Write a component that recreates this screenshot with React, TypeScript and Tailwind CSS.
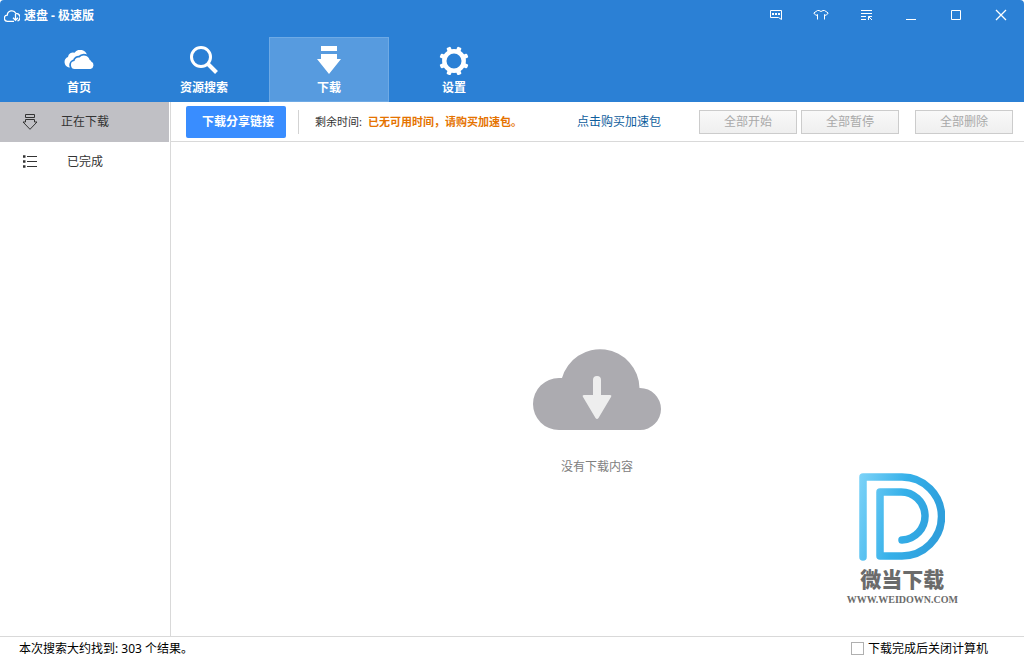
import { useState } from 'react'
import type { ReactNode } from 'react'

type Tab = { id: string; label: string; icon: ReactNode }

const GEAR_ANGLES = [22.5, 67.5, 112.5, 157.5, 202.5, 247.5, 292.5, 337.5]

function CloudsIcon() {
  return (
    <svg width="30" height="20" viewBox="0 0 30 20" fill="#fff">
      <path d="M5 17.500a5.500 5.500 0 0 1-1-10.500a5 5 0 0 1 6.500-4.200a7 7 0 0 1 12.500 2.200v3L12 17z" />
      <path
        d="M11.500 19a4 4 0 0 1-1-8a4.500 4.500 0 0 1 5-3.500a6 6 0 0 1 10.200 2.500q1.300 0 1.500 1.500a4 4 0 0 1-.7 7.500z"
        stroke="#2b80d5"
        strokeWidth="3.500"
      />
      <path d="M11.500 19a4 4 0 0 1-1-8a4.500 4.500 0 0 1 5-3.500a6 6 0 0 1 10.200 2.500q1.300 0 1.500 1.500a4 4 0 0 1-.7 7.500z" />
    </svg>
  )
}

function SearchIcon() {
  return (
    <svg width="28" height="28" viewBox="0 0 28 28" fill="none" stroke="#fff">
      <circle cx="11" cy="11" r="9.500" strokeWidth="3" />
      <path d="M18 18l8.500 8.500" strokeWidth="4" />
    </svg>
  )
}

function DownloadIcon() {
  return (
    <svg width="24" height="28" viewBox="0 0 24 28" fill="#fff">
      <path d="M4 0h16v5H4zM4 8h16v5h4L12 28 0 13h4z" />
    </svg>
  )
}

function GearIcon() {
  return (
    <svg width="30" height="30" viewBox="-15 -16 30 30" fill="none">
      <circle r="9.700" stroke="#fff" strokeWidth="4.400" />
      {GEAR_ANGLES.map((a) => (
        <rect key={a} x="-2.200" y="-14.800" width="4.400" height="5" rx="1.200" fill="#fff" transform={`rotate(${a})`} />
      ))}
    </svg>
  )
}

const TABS: Tab[] = [
  { id: 'home', label: '首页', icon: <CloudsIcon /> },
  { id: 'search', label: '资源搜索', icon: <SearchIcon /> },
  { id: 'download', label: '下载', icon: <DownloadIcon /> },
  { id: 'settings', label: '设置', icon: <GearIcon /> },
]

const WINDOW_ACTIONS: { name: string; icon: ReactNode }[] = [
  {
    name: '消息',
    icon: (
      <>
        <path d="M2.500 3.500h11v9l-3-2h-8z" />
        <path d="M4 7h2M7 7h2M10 7h2" strokeWidth="2" />
      </>
    ),
  },
  {
    name: '皮肤',
    icon: <path d="M4.500 12.500V7.500L3 8.500 .8 6l3.700-2.500h1.500q2 2 4 0h1.500L15.200 6 13 8.500 11.500 7.500v5" />,
  },
  {
    name: '菜单',
    icon: <path d="M3 3.500h11M3 6.500h11M3 9.500h5M3 12.500h5M10.500 13V9.500H14M10.500 9.500l3.500 3.500" />,
  },
  { name: '最小化', icon: <path d="M3 12.500h10" /> },
  { name: '最大化', icon: <path d="M3.500 3.500h9v9h-9z" /> },
  { name: '关闭', icon: <path d="M3 3l10 10M13 3L3 13" strokeWidth="1.300" /> },
]

const SIDE_ITEMS = [
  {
    id: 'active',
    label: '正在下载',
    icon: <path d="M3.500 .5h9v3h-9zM3.500 5.500h9v2.500h2.500L8 15.300 1 8h2.500z" />,
  },
  {
    id: 'done',
    label: '已完成',
    icon: (
      <>
        <path d="M5 2.500h10M5 7.500h10M5 12.500h10" />
        <path d="M1 2.500h2.500M1 7.500h2.500M1 12.500h2.500" strokeWidth="2.500" />
      </>
    ),
  },
]

function BulkButton({ children }: { children: ReactNode }) {
  return (
    <button
      type="button"
      disabled
      className="h-6 w-[98px] shrink-0 border border-[#cccccc] bg-linear-to-b from-[#f9f9f9] to-[#efefef] text-[#a9a9a9]"
    >
      {children}
    </button>
  )
}

function Watermark() {
  return (
    <div className="absolute right-[66px] bottom-[30px] flex flex-col items-center text-[#6b6b6b]">
      <svg width="86" height="88" viewBox="0 0 86 88" fill="none">
        <defs>
          <linearGradient id="brand" x1="0" y1="0" x2="86" y2="20" gradientUnits="userSpaceOnUse">
            <stop offset="0" stopColor="#7dd3f8" />
            <stop offset="0.55" stopColor="#35b0e9" />
            <stop offset="1" stopColor="#2f9fdc" />
          </linearGradient>
        </defs>
        <path
          d="M4 84V4H43A39.500 39.500 0 0 1 43 83H21V19H41A24 24 0 0 1 43 67"
          stroke="url(#brand)"
          strokeWidth="7.500"
          strokeLinecap="round"
          strokeLinejoin="round"
        />
      </svg>
      <span className="mt-[3px] text-[21px] leading-[30px] font-black">微当下载</span>
      <span className="font-['Liberation_Serif',serif] text-[10px] leading-3 font-bold">WWW.WEIDOWN.COM</span>
    </div>
  )
}

export default function App() {
  const [tab, setTab] = useState('download')
  const [side, setSide] = useState('active')
  const [shutdown, setShutdown] = useState(false)

  return (
    <div className="flex h-screen flex-col bg-white font-['Noto_Sans','Noto_Sans_CJK_SC',sans-serif] text-xs text-[#333333]">
      <header className="rounded-t-sm bg-[#2b80d5] text-white">
        <div className="flex h-[30px] items-center justify-between pr-px pl-1">
          <h1 className="flex items-center gap-1 pt-0.5 font-bold">
            <svg width="16" height="12" viewBox="0 0 16 12" fill="none" stroke="currentColor" strokeWidth="1.300">
              <path d="M10 11.300H3.500A3 3 0 0 1 3.300 5.200A4.500 4.500 0 0 1 11.800 3.300A4 4 0 0 1 13.500 11" />
              <path d="M11.500 4v6M9 7.800l2.500 2.500L14 7.800" />
            </svg>
            速盘 - 极速版
          </h1>
          <div className="flex">
            {WINDOW_ACTIONS.map((a) => (
              <button key={a.name} type="button" aria-label={a.name} className="flex h-[30px] w-[45px] items-center justify-center">
                <svg width="16" height="16" viewBox="0 0 16 16" fill="none" stroke="currentColor">
                  {a.icon}
                </svg>
              </button>
            ))}
          </div>
        </div>

        <nav className="mt-[7px] flex gap-[5px] pl-[19px]">
          {TABS.map((t) => (
            <button
              key={t.id}
              type="button"
              onClick={() => setTab(t.id)}
              className={`flex h-[65px] w-[120px] flex-col items-center border pt-[7px] ${
                tab === t.id ? 'border-[#6eaae5] bg-[#579bdf]' : 'border-transparent'
              }`}
            >
              <span className="flex h-[30px] items-center">{t.icon}</span>
              <span className="mt-[5px] leading-4 font-bold">{t.label}</span>
            </button>
          ))}
        </nav>
      </header>

      <div className="flex min-h-0 flex-1">
        <aside className="w-[171px] shrink-0 border-r border-[#d9d9d9] pr-px">
          {SIDE_ITEMS.map((s) => (
            <button
              key={s.id}
              type="button"
              onClick={() => setSide(s.id)}
              className={`flex h-10 w-full items-center pl-[22px] ${side === s.id ? 'bg-[#c0c0c5]' : ''}`}
            >
              <svg width="16" height="16" viewBox="0 0 16 16" fill="none" stroke="#333">
                {s.icon}
              </svg>
              <span className="ml-[23px] w-12 text-center">{s.label}</span>
            </button>
          ))}
        </aside>

        <main className="relative flex min-w-0 flex-1 flex-col">
          <div className="flex h-10 shrink-0 items-center border-b border-[#d9d9d9] pt-px pr-[11px] pl-[15px] whitespace-nowrap">
            <button type="button" className="h-8 w-[100px] shrink-0 rounded-xs bg-[#398dff] pl-1 font-bold text-white">
              下载分享链接
            </button>
            <span className="ml-3 h-6 w-px bg-[#d3d3d3]" />
            <p className="ml-4 flex gap-1.5 text-[11px]">
              <span>剩余时间:</span>
              <span className="font-bold text-[#e57300]">已无可用时间，请购买加速包。</span>
            </p>
            <a href="#buy" className="mr-[38px] ml-auto text-[#0e5d9c]">
              点击购买加速包
            </a>
            <div className="flex gap-4">
              <div className="flex gap-1">
                <BulkButton>全部开始</BulkButton>
                <BulkButton>全部暂停</BulkButton>
              </div>
              <BulkButton>全部删除</BulkButton>
            </div>
          </div>

          <div className="flex flex-1 flex-col items-center justify-center pt-[47px] pr-px">
            <svg width="128" height="81" viewBox="0 0 128 81">
              <path
                d="M26 81A26 26 0 0 1 26 29H29A39.500 39.500 0 0 1 106.500 39H107A21 21 0 0 1 107 81Z"
                fill="#acabb0"
              />
              <path
                d="M60 46V31a4 4 0 0 1 8 0v15h9q2 0 1 2L65.500 69q-1.500 2-3 0L50 48q-1-2 1-2z"
                fill="#eeeeee"
              />
            </svg>
            <p className="mt-7 leading-[18px] text-[#808080]">没有下载内容</p>
          </div>

          <Watermark />
        </main>
      </div>

      <footer className="flex h-6 shrink-0 items-center justify-between border-t border-[#d9d9d9] pr-9 pl-[19px] text-black">
        <span>本次搜索大约找到: 303 个结果。</span>
        <label className="flex items-center gap-1">
          <input
            type="checkbox"
            checked={shutdown}
            onChange={(e) => setShutdown(e.target.checked)}
            className="size-[13px] appearance-none border border-[#b0b0b0] bg-white checked:bg-[#398dff]"
          />
          下载完成后关闭计算机
        </label>
      </footer>
    </div>
  )
}
